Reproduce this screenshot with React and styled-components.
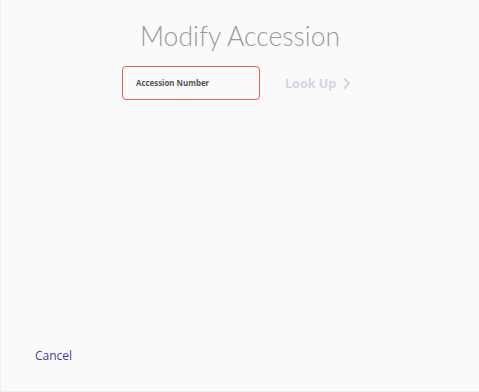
import React from "react";
import styled, { createGlobalStyle } from "styled-components";

const Global = createGlobalStyle`
  html, body { margin: 0; padding: 0; background: #fafafa; }
  body { font-family: "Open Sans", "Noto Sans", sans-serif; }
  * { box-sizing: border-box; }
`;

const Page = styled.div`
  width: 479px;
  height: 392px;
  background: #fafafa;
  border-left: 1px solid #f0f0f0;
  border-bottom: 1px solid #f0f0f0;
  display: flex;
  flex-direction: column;
`;

const Title = styled.h1`
  margin: 18px 0 0;
  text-align: center;
  font-family: "Lato", "Open Sans", sans-serif;
  font-weight: 300;
  font-size: 26.5px;
  line-height: 36px;
  color: #9a9a9a;
`;

const SearchRow = styled.div`
  display: flex;
  align-items: center;
  margin: 12px 0 0 121px;
  gap: 25px;
`;

const Field = styled.label`
  width: 138px;
  height: 34px;
  border: 1px solid #f2575c;
  border-radius: 4px;
  display: flex;
  align-items: center;
  padding-left: 13px;
  font-family: "Open Sans", sans-serif;
  font-weight: 700;
  font-size: 7.9px;
  color: #555;
`;

const LookUp = styled.button`
  border: none;
  background: none;
  padding: 0;
  display: flex;
  align-items: center;
  gap: 6px;
  font-family: "Open Sans", sans-serif;
  font-weight: 700;
  font-size: 12.6px;
  color: #d6d2ea;
  cursor: pointer;
`;

const Spacer = styled.div`
  flex: 1;
`;

const CancelButton = styled.button`
  align-self: flex-start;
  margin: 0 0 27px 34px;
  border: none;
  background: none;
  padding: 0;
  font-family: "Open Sans", sans-serif;
  font-size: 12px;
  color: #4a3aa0;
  cursor: pointer;
`;

export default function App() {
  return (
    <>
      <Global />
      <Page>
        <Title>Modify Accession</Title>
        <SearchRow>
          <Field>Accession Number</Field>
          <LookUp>
            Look Up
            <svg width="9" height="13" viewBox="0 0 9 13">
              <path d="M2 1.5 L7 6.5 L2 11.5" fill="none" stroke="#d6d2ea" strokeWidth="2" />
            </svg>
          </LookUp>
        </SearchRow>
        <Spacer />
        <CancelButton>Cancel</CancelButton>
      </Page>
    </>
  );
}
